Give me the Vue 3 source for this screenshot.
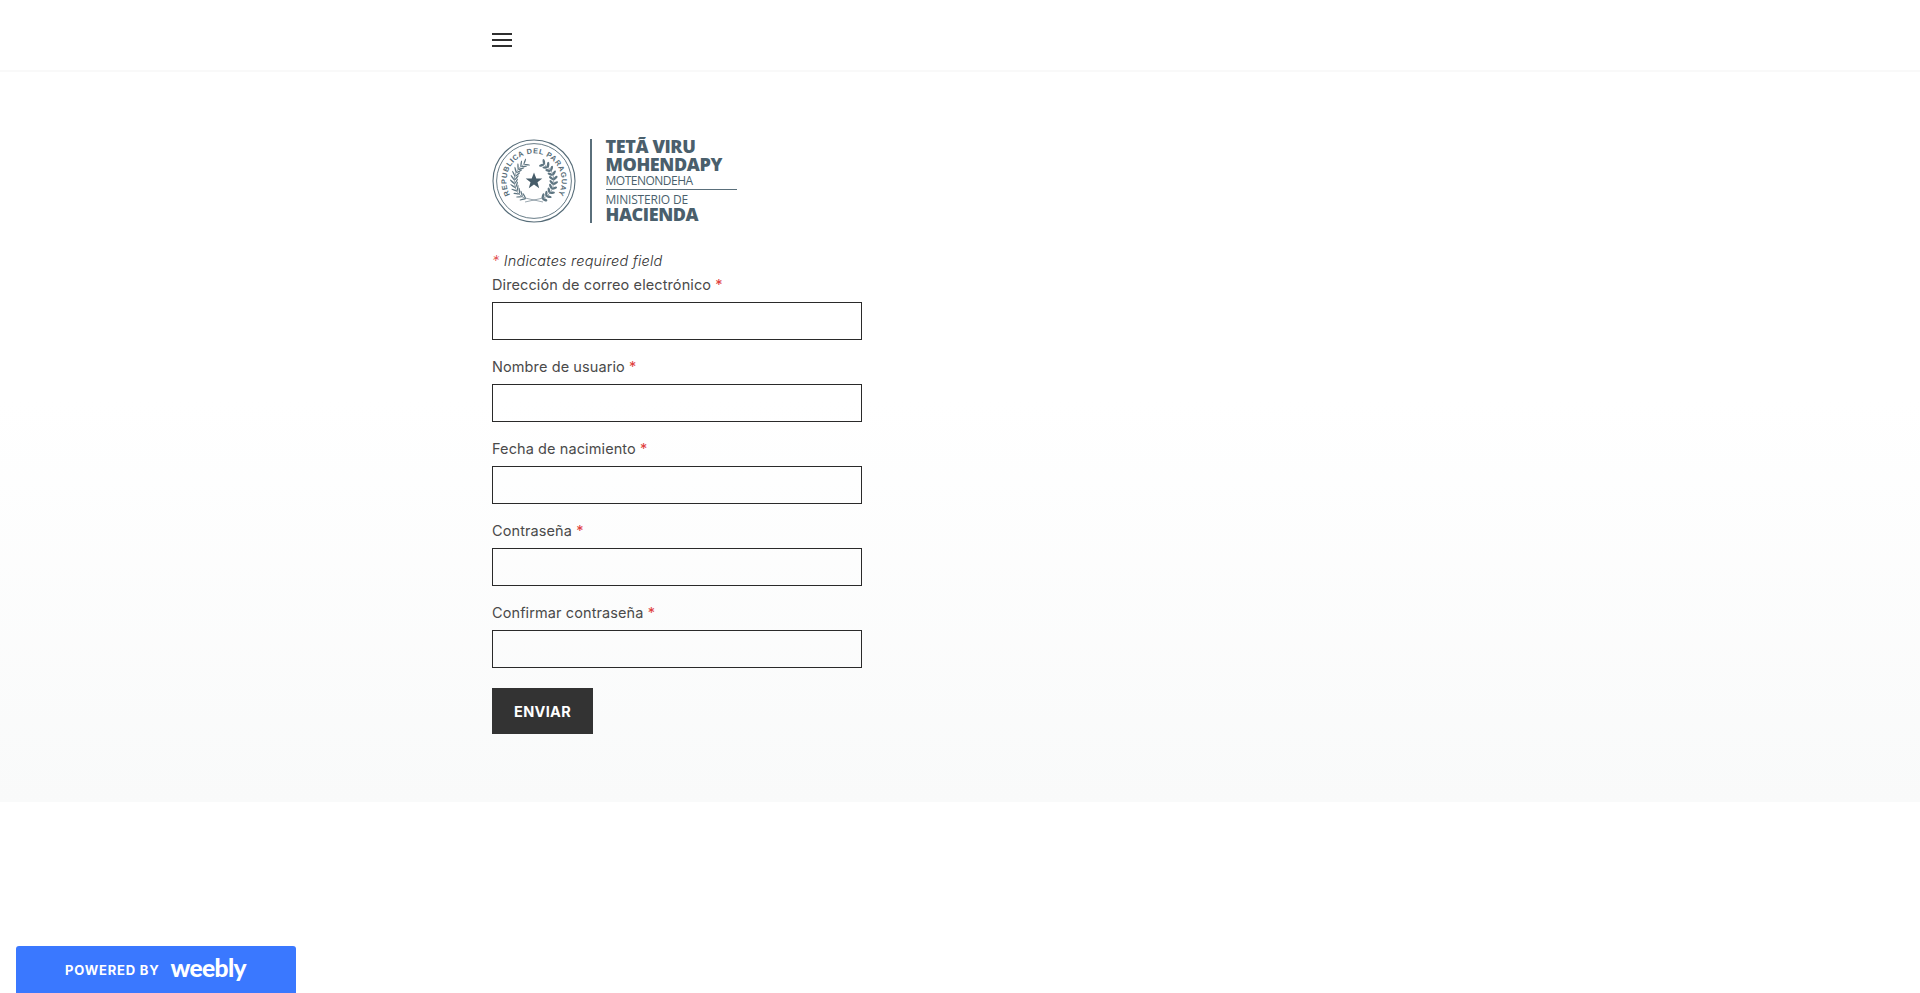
<script setup>
const fields = [
  'Dirección de correo electrónico',
  'Nombre de usuario',
  'Fecha de nacimiento',
  'Contraseña',
  'Confirmar contraseña',
];

// Places n leaves along an arc round the seal centre, on both sides of the stem
function branch(startDeg, endDeg, r, n, len, spread) {
  const out = [];
  for (let i = 0; i < n; i++) {
    const deg = startDeg + ((endDeg - startDeg) * i) / (n - 1);
    const a = (deg * Math.PI) / 180;
    const x = r * Math.cos(a);
    const y = r * Math.sin(a);
    const dir = deg + (endDeg > startDeg ? 90 : -90);
    for (const side of [-1, 1]) {
      const d = dir + side * spread;
      const rad = (d * Math.PI) / 180;
      out.push({
        x: x + Math.cos(rad) * len * 0.5,
        y: y + Math.sin(rad) * len * 0.5,
        rot: d,
      });
    }
  }
  return out;
}

const palm = branch(115, 238, 19.5, 12, 6.5, 38);
const olive = branch(65, -58, 19.5, 10, 5.5, 48);
</script>

<template>
  <div class="page">
    <header class="topbar">
      <div class="container">
        <button class="burger" aria-label="Menu"><span></span><span></span><span></span></button>
      </div>
    </header>

    <main class="content">
      <div class="container">
        <div class="logo">
          <svg class="seal" width="84" height="84" viewBox="-42 -42 84 84">
            <defs>
              <path id="seal-arc" d="M -23.8 14 A 27.6 27.6 0 1 1 23.8 14" />
            </defs>
            <circle r="41" class="ring" stroke-width="1.1" />
            <circle r="37.4" class="ring" stroke-width="0.9" />
            <text class="seal-text">
              <textPath href="#seal-arc" startOffset="50%" text-anchor="middle">REPUBLICA DEL PARAGUAY</textPath>
            </text>
            <path class="stem" d="M -8 18 A 19.5 19.5 0 0 1 -10.5 -16.5 M 8 18 A 19.5 19.5 0 0 0 10.5 -16.5 M -9 21 L 9 17 M 9 21 L -9 17" />
            <ellipse
              v-for="(l, i) in palm"
              :key="'p' + i"
              class="leaf"
              rx="3.2"
              ry="0.7"
              :transform="`translate(${l.x} ${l.y}) rotate(${l.rot})`"
            />
            <ellipse
              v-for="(l, i) in olive"
              :key="'o' + i"
              class="leaf"
              rx="2.8"
              ry="1.25"
              :transform="`translate(${l.x} ${l.y}) rotate(${l.rot})`"
            />
            <polygon class="star" points="0,-8.5 2.3,-2.6 8.3,-2.6 3.5,1.2 5.2,7.2 0,3.6 -5.2,7.2 -3.5,1.2 -8.3,-2.6 -2.3,-2.6" />
          </svg>
          <div class="logo-rule"></div>
          <div class="logo-text">
            <div class="lt-bold">TETÃ VIRU</div>
            <div class="lt-bold">MOHENDAPY</div>
            <div class="lt-thin lt-moten">MOTENONDEHA</div>
            <div class="lt-line"></div>
            <div class="lt-thin lt-minis">MINISTERIO DE</div>
            <div class="lt-bold">HACIENDA</div>
          </div>
        </div>

        <form class="form" @submit.prevent>
          <p class="required-note"><span class="star-mark">*</span> Indicates required field</p>
          <div v-for="label in fields" :key="label" class="field">
            <label class="field-label">{{ label }} <span class="star-mark">*</span></label>
            <input class="field-input" type="text" />
          </div>
          <button class="submit" type="submit">ENVIAR</button>
        </form>
      </div>
    </main>

    <a class="badge">
      <span class="badge-small">POWERED BY</span>
      <span class="badge-brand">weebly</span>
    </a>
  </div>
</template>

<style>
html, body {
  margin: 0;
  background: #fff;
}
</style>

<style scoped>
.page {
  min-height: 993px;
  font-family: Inter, "Open Sans", sans-serif;
  color: #3a3a3a;
  background: #fff;
}

.container {
  width: 1100px;
  margin-left: 492px;
}

.topbar {
  height: 72px;
  box-sizing: border-box;
  border-bottom: 2px solid #f9f9f9;
  display: flex;
  align-items: center;
}

.burger {
  display: flex;
  flex-direction: column;
  gap: 4px;
  width: 20px;
  padding: 0;
  margin-top: 10px;
  border: 0;
  background: none;
}

.burger span {
  display: block;
  height: 2px;
  background: #2f2f2f;
}

.content {
  height: 730px;
  padding-top: 66px;
  box-sizing: border-box;
  background: linear-gradient(to bottom, #fff 0%, #fff 45%, #f9fafa 100%);
}

.logo {
  display: flex;
  align-items: center;
  height: 86px;
}

.seal {
  flex: none;
}

.ring {
  fill: none;
  stroke: #566c78;
}

.seal-text {
  font-family: "Liberation Sans", sans-serif;
  font-size: 7.4px;
  font-weight: 700;
  letter-spacing: 0.55px;
  fill: #566c78;
}

.leaf {
  fill: #5f7682;
}

.stem {
  stroke: #566c78;
  stroke-width: 0.6;
  fill: none;
}

.star {
  fill: #465c69;
}

.logo-rule {
  width: 1.5px;
  height: 84px;
  margin-left: 14px;
  background: #5a6f7b;
}

.logo-text {
  margin-left: 14px;
  margin-top: -2px;
  color: #4a5f6c;
  width: 131px;
}

.lt-bold {
  font-family: "Open Sans", sans-serif;
  font-size: 18px;
  font-weight: 800;
  line-height: 18px;
  letter-spacing: -0.4px;
}

.lt-thin {
  font-family: "Open Sans", sans-serif;
  font-size: 12px;
  line-height: 14px;
}

.lt-moten {
  margin-top: 1px;
  letter-spacing: -0.5px;
}

.lt-minis {
  margin-bottom: -2px;
  letter-spacing: -0.2px;
}

.lt-line {
  height: 1.3px;
  margin: 1.5px 0 3px;
  background: #5a6f7b;
}

.form {
  margin-top: 25px;
}

.required-note {
  margin: 0;
  font-size: 14.5px;
  font-style: italic;
  font-weight: 300;
  line-height: 24px;
  letter-spacing: 0.2px;
  color: #333;
}

.star-mark {
  color: #e0403e;
}

.field {
  margin-bottom: 15px;
}

.field-label {
  display: block;
  font-size: 14.5px;
  font-weight: 400;
  line-height: 24px;
  letter-spacing: 0.1px;
  color: #4a4a4a;
}

.field-input {
  display: block;
  width: 370px;
  height: 38px;
  margin-top: 5px;
  padding: 0 8px;
  box-sizing: border-box;
  border: 1px solid #2a2a2a;
  border-radius: 0;
  background: transparent;
  outline: none;
}

.submit {
  display: block;
  width: 101px;
  height: 46px;
  margin-top: 20px;
  padding: 0;
  border: 0;
  background: #333;
  color: #fff;
  font-family: Inter, sans-serif;
  font-size: 14.5px;
  font-weight: 700;
  letter-spacing: 0.3px;
}

/* stays over the page corner */
.badge {
  position: fixed;
  left: 16px;
  bottom: 0;
  width: 280px;
  height: 47px;
  padding-left: 49px;
  box-sizing: border-box;
  display: flex;
  align-items: center;
  gap: 11px;
  border-radius: 3px 3px 0 0;
  background: #3a78ff;
  color: #fff;
}

.badge-small {
  font-family: Inter, sans-serif;
  font-size: 13px;
  font-weight: 700;
  letter-spacing: 0.8px;
}

.badge-brand {
  font-family: Lato, sans-serif;
  font-size: 24.5px;
  font-weight: 900;
  letter-spacing: -0.6px;
  line-height: 1;
  margin-top: -3px;
}
</style>
